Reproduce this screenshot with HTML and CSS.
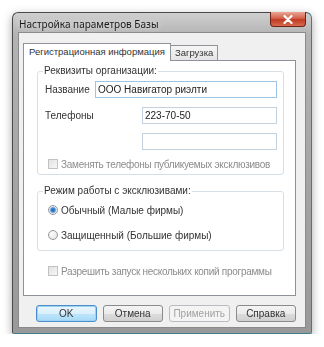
FILE: index.html
```html
<!DOCTYPE html>
<html lang="ru">
<head>
  <meta charset="UTF-8">
  <title>Настройка параметров Базы</title>
  <link rel="stylesheet" href="styles.css">
</head>
<body>
  <!-- Окно настроек -->
  <div class="window">
    <div class="titlebar">
      <span class="title">Настройка параметров Базы</span>
      <button class="close-btn" aria-label="Закрыть">
        <svg width="10" height="9" viewBox="0 0 10 9">
          <path d="M1.5 1 L8.5 8 M8.5 1 L1.5 8" stroke="#fff" stroke-width="2.2" stroke-linecap="round"/>
        </svg>
      </button>
    </div>

    <div class="dialog-body">
      <!-- Вкладки -->
      <div class="tabs">
        <div class="tab active">Регистрационная информация</div>
        <div class="tab">Загрузка</div>
      </div>

      <div class="tab-panel">
        <fieldset class="group group-org">
          <legend>Реквизиты организации:</legend>
          <div class="row">
            <label class="field-label">Название</label>
            <input type="text" class="textbox focused name-box" value="ООО Навигатор риэлти">
          </div>
          <div class="row">
            <label class="field-label">Телефоны</label>
            <input type="text" class="textbox phone-box" value="223-70-50">
          </div>
          <div class="row row-right">
            <input type="text" class="textbox phone-box" value="">
          </div>
          <div class="check disabled">
            <span class="checkbox"></span>
            <span>Заменять телефоны публикуемых эксклюзивов</span>
          </div>
        </fieldset>

        <fieldset class="group group-mode">
          <legend>Режим работы с эксклюзивами:</legend>
          <div class="radio-row">
            <span class="radio checked"></span>
            <span>Обычный (Малые фирмы)</span>
          </div>
          <div class="radio-row">
            <span class="radio"></span>
            <span>Защищенный (Большие фирмы)</span>
          </div>
        </fieldset>

        <div class="check disabled multi">
          <span class="checkbox"></span>
          <span>Разрешить запуск нескольких копий программы</span>
        </div>
      </div>

      <!-- Кнопки -->
      <div class="buttons">
        <button class="btn default">OK</button>
        <button class="btn">Отмена</button>
        <button class="btn" disabled>Применить</button>
        <button class="btn">Справка</button>
      </div>
    </div>
  </div>
</body>
</html>
```

FILE: styles.css
```css
/* основа */
body {
  margin: 0;
  background: #fff;
  font-family: "Liberation Sans", Arial, sans-serif;
  font-size: 10px;
  color: #333;
}

/* рамка окна */
.window {
  box-sizing: border-box;
  width: 300px;
  height: 322px;
  margin: 12px 0 0 12px;
  padding: 0 5px 5px 5px;
  border: 1px solid #4a4a4a;
  border-right-color: #3d7f8c;
  border-bottom-color: #3d7f8c;
  border-radius: 6px 6px 2px 2px;
  background: linear-gradient(#cfcfcf, #b3b3b3 22px, #a2a2a2 60%, #999);
  box-shadow: 0 3px 10px rgba(0, 0, 0, 0.35);
  filter: blur(0.3px);
}
.titlebar {
  height: 19px;
  display: flex;
  justify-content: space-between;
  align-items: flex-start;
}
.title {
  margin: 5px 0 0 1px;
  font-family: "Noto Sans", sans-serif;
  font-size: 10px;
  line-height: 12px;
  color: #1b1b1b;
  text-shadow: 0 0 6px rgba(255, 255, 255, 0.9);
}
.close-btn {
  width: 36px;
  height: 15px;
  margin-top: -1px;
  padding: 0;
  display: flex;
  align-items: center;
  justify-content: center;
  border: 1px solid #6b2318;
  border-top: none;
  border-radius: 0 0 4px 4px;
  background: linear-gradient(#e9a594, #d4614c 45%, #c23a24 55%, #d86a4f);
}

/* клиентская область */
.dialog-body {
  height: 296px;
  box-sizing: border-box;
  padding: 10px 9px 0 4px;
  background: #f0f0f0;
  border: 1px solid #8a8a8a;
}

/* вкладки */
.tabs {
  display: flex;
  align-items: flex-end;
  height: 17px;
  font-size: 9.5px;
}
.tab {
  height: 14px;
  line-height: 14px;
  padding: 0 4px;
  border: 1px solid #8e9299;
  border-bottom: none;
  background: linear-gradient(#f6f6f6, #e4e4e4);
  margin-left: -1px;
}
.tab.active {
  height: 17px;
  line-height: 16px;
  padding: 0 5px;
  background: #fff;
  position: relative;
  z-index: 1;
  margin-bottom: -1px;
  margin-left: 0;
}
.tab-panel {
  box-sizing: border-box;
  height: 236px;
  border: 1px solid #8e9299;
  background: #fff;
  padding: 4px 11px 0 13px;
}

/* группы */
.group {
  box-sizing: border-box;
  margin: 0;
  padding: 4px 6px 0 7px;
  border: 1px solid #d6dfe6;
  border-radius: 3px;
  min-width: 0;
}
.group legend {
  padding: 0 1px;
  margin-left: -2px;
  line-height: 12px;
}
.row {
  display: flex;
  align-items: center;
  justify-content: space-between;
  height: 17px;
  margin-bottom: 9px;
}
.row-right {
  justify-content: flex-end;
  margin-bottom: 8px;
}
.field-label {
  padding-left: 0;
}
.textbox {
  box-sizing: border-box;
  height: 17px;
  padding: 0 2px;
  font: inherit;
  color: #222;
  border: 1px solid #c5d2de;
  background: #fff;
  outline: none;
}
.textbox.focused {
  border-color: #9ec3e6;
}
.name-box {
  width: 182px;
}
.phone-box {
  width: 135px;
}

/* флажки и переключатели */
.check {
  display: flex;
  align-items: center;
  gap: 3px;
  height: 12px;
  padding-left: 3px;
  white-space: nowrap;
  letter-spacing: -0.28px;
}
.check.disabled {
  color: #8c8c8c;
}
.checkbox {
  box-sizing: border-box;
  flex: none;
  width: 10px;
  height: 10px;
  border: 1px solid #c2c2c2;
  background: linear-gradient(135deg, #e2e2e2, #f7f7f7);
}
.group-org {
  height: 110px;
}
.group-mode {
  margin-top: 10px;
  height: 66px;
  padding-top: 7px;
}
.radio-row {
  display: flex;
  align-items: center;
  gap: 3px;
  height: 12px;
  padding-left: 3px;
  margin-bottom: 13px;
}
.radio {
  box-sizing: border-box;
  flex: none;
  width: 10px;
  height: 10px;
  border-radius: 50%;
  border: 1px solid #9a9a9a;
  background: radial-gradient(circle at 40% 35%, #fff, #dcdcdc);
}
.radio.checked {
  background: radial-gradient(circle, #1d5fa8 0, #3f8ad6 2px, #9cc6ee 3px, #e8e8e8 3.6px, #f4f4f4);
}
.multi {
  margin-top: 14px;
  padding-left: 11px;
}

/* кнопки */
.buttons {
  display: flex;
  gap: 6px;
  padding: 9px 0 0 13px;
}
.btn {
  box-sizing: border-box;
  width: 62px;
  height: 17px;
  padding: 0;
  font: inherit;
  color: #333;
  border: 1px solid #8b8b8b;
  border-radius: 3px;
  background: linear-gradient(#f4f4f4, #ebebeb 50%, #dcdcdc 51%, #d0d0d0);
}
.btn.default {
  border-color: #4b8ecb;
  background: linear-gradient(#eaf6fd, #d9f0fc 50%, #bee6fd 51%, #a7d9f5);
  box-shadow: inset 0 0 0 1px #9dd3f2;
}
.btn:disabled {
  color: #a2a2a2;
  border-color: #b8bcc0;
  background: #f4f4f4;
}
```
